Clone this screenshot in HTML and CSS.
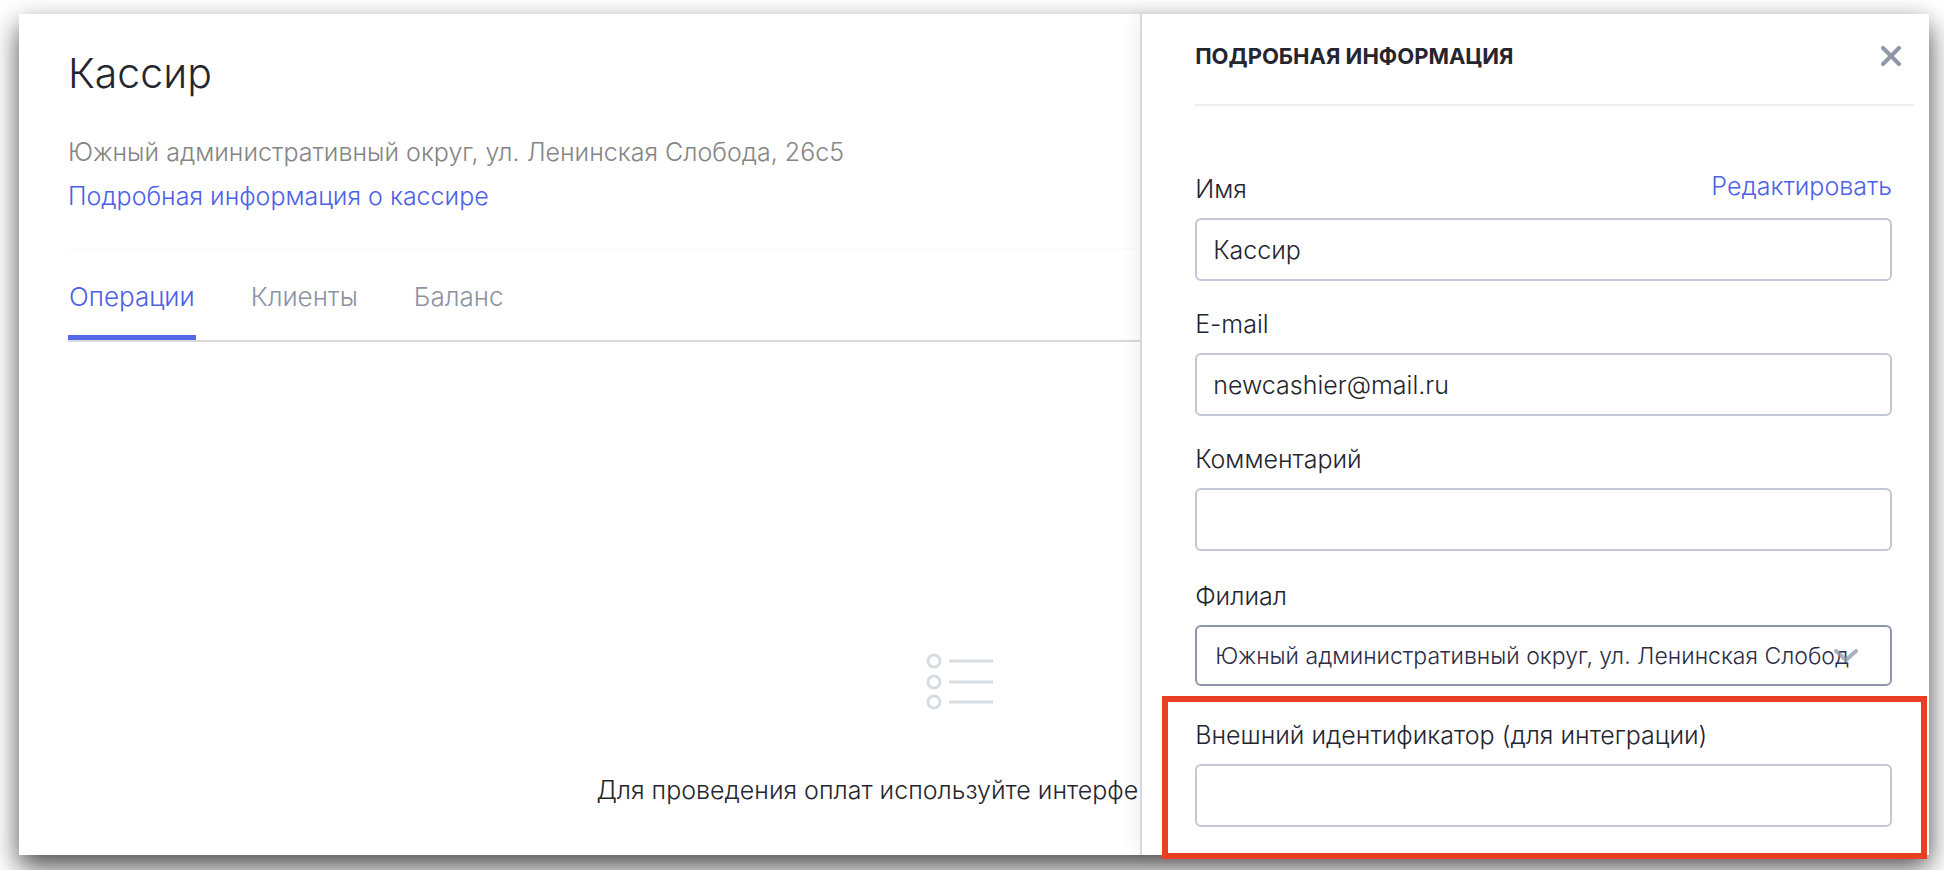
FILE: index.html
```
<!DOCTYPE html>
<html lang="ru">
<head>
  <meta charset="UTF-8" />
  <meta name="viewport" content="width=device-width, initial-scale=1.0"/>
  <title>Кассир</title>
  <link rel="stylesheet" href="styles.css">
</head>
<body>
  <div class="window">
    <main class="page">
      <h1>Кассир</h1>
      <p class="address">Южный административный округ, ул. Ленинская Слобода, 26с5</p>
      <a class="link" href="#details">Подробная информация о кассире</a>

      <nav class="tabs">
        <a class="tab active" href="#operations">Операции</a>
        <a class="tab" href="#clients">Клиенты</a>
        <a class="tab" href="#balance">Баланс</a>
      </nav>

      <div class="empty">
        <svg class="empty-icon" width="68" height="58" viewBox="0 0 68 58" fill="none" stroke="#d6dde2" stroke-width="3">
          <circle cx="8" cy="8" r="6"/>
          <circle cx="8" cy="29" r="6"/>
          <circle cx="8" cy="49" r="6"/>
          <path d="M23 8h44M23 29h44M23 49h44"/>
        </svg>
        <p>Для проведения оплат используйте интерфейс приложения</p>
      </div>
    </main>

    <!-- Details drawer -->
    <aside class="panel" id="details">
      <div class="panel-header">
        <h2>Подробная информация</h2>
        <button class="close-btn" type="button" aria-label="Закрыть">
          <svg width="20" height="20" viewBox="0 0 20 20" fill="none" stroke="#8f97a8" stroke-width="4" stroke-linecap="round">
            <path d="M2 2l16 16M18 2L2 18"/>
          </svg>
        </button>
      </div>

      <form class="panel-form">
        <div class="form-group">
          <div class="label-row">
            <label for="name">Имя</label>
            <a class="link" href="#edit">Редактировать</a>
          </div>
          <input type="text" id="name" value="Кассир" />
        </div>
        <div class="form-group">
          <label for="email">E-mail</label>
          <input type="email" id="email" value="newcashier@mail.ru" />
        </div>
        <div class="form-group">
          <label for="comment">Комментарий</label>
          <input type="text" id="comment" />
        </div>
        <div class="form-group branch">
          <label for="branch">Филиал</label>
          <div class="select-wrap">
            <select id="branch">
              <option>Южный административный округ, ул. Ленинская Слобода, 26с5</option>
            </select>
            <svg class="chevron" width="24" height="14" viewBox="0 0 24 14" fill="none" stroke="#8f97a8" stroke-opacity="0.75" stroke-width="4" stroke-linecap="round">
              <path d="M2 2l10 9 10-9"/>
            </svg>
          </div>
        </div>
        <div class="form-group highlight">
          <label for="externalId">Внешний идентификатор (для интеграции)</label>
          <input type="text" id="externalId" />
        </div>
      </form>
    </aside>
  </div>
</body>
</html>
```
FILE: styles.css
```
* {
  margin: 0;
  padding: 0;
  box-sizing: border-box;
  font-family: 'Inter', 'Noto Sans', sans-serif;
}

body {
  background: #fff;
  padding: 14px 15px 15px 19px;
  overflow: hidden;
  font-size: 25px;
  font-weight: 300;
  line-height: 28px;
  color: #24252e;
}

/* The drawer lies over the right part of the page */
.window {
  display: grid;
  grid-template-columns: 1fr 41.3%;
  background: #fff;
  box-shadow: 0 12px 26px rgba(0,0,0,0.7);
}

.page {
  grid-column: 1 / -1;
  grid-row: 1;
  padding: 35px 78px 0 49px;
}

h1 {
  font-size: 41px;
  line-height: 48px;
  font-weight: 300;
}

.address {
  margin-top: 41px;
  color: #858585;
}

.link {
  color: #4d60e8;
  text-decoration: none;
}

.page .link {
  display: inline-block;
  margin-top: 16px;
}

.tabs {
  display: flex;
  gap: 54px;
  margin-top: 38px;
  margin-right: -78px;
  border-top: 1px solid #fafafa;
  border-bottom: 2px solid #d9d9db;
}

.tab {
  padding: 34px 1px 24px;
  border-bottom: 5px solid transparent;
  color: #8d93a3;
  font-size: 26px;
  text-decoration: none;
}

.tab.active {
  color: #4d60e8;
  border-bottom-color: #5568e8;
  border-radius: 4px 4px 0 0;
}

.empty {
  display: flex;
  flex-direction: column;
  align-items: center;
  gap: 65px;
  margin-top: 311px;
  text-align: center;
}

.panel {
  grid-column: 2;
  grid-row: 1;
  background: #fff;
  border-left: 2px solid #d9d9db;
  box-shadow: -4px 0 16px rgba(0,0,0,0.06);
  padding: 0 15px 28px 53px;
}

.panel-header {
  display: flex;
  justify-content: space-between;
  align-items: center;
  padding: 28px 10px 34px 0;
  border-bottom: 2px solid #eeeeef;
}

h2 {
  font-size: 22px;
  line-height: 28px;
  font-weight: 700;
  text-transform: uppercase;
}

.close-btn {
  display: flex;
  padding: 4px 3px;
  border: none;
  background: none;
  cursor: pointer;
}

.panel-form {
  display: flex;
  flex-direction: column;
  gap: 29px;
  padding: 69px 22px 0 0;
}

.form-group {
  display: flex;
  flex-direction: column;
  gap: 15px;
}

.label-row {
  display: flex;
  justify-content: space-between;
}

.label-row .link {
  margin-top: -3px;
}

input, select {
  width: 100%;
  height: 63px;
  padding: 0 16px;
  border: 2px solid #c3c7d6;
  border-radius: 6px;
  background: #fff;
  color: #24252e;
  font-size: 25px;
  font-weight: 300;
}

.branch {
  padding: 2px 0 6px;
}

.select-wrap {
  position: relative;
}

select {
  display: block;
  appearance: none;
  height: 61px;
  padding: 0 41px 0 18px;
  border-color: #8f96ab;
  color: #2c2c48;
  font-size: 23px;
}

.chevron {
  position: absolute;
  right: 34px;
  top: 24px;
  pointer-events: none;
}

/* Red frame round the field */
.highlight {
  position: relative;
}

.highlight::after {
  content: '';
  position: absolute;
  inset: -25px -35px -32px -33px;
  border: 6px solid #ea3e23;
  pointer-events: none;
}
```
